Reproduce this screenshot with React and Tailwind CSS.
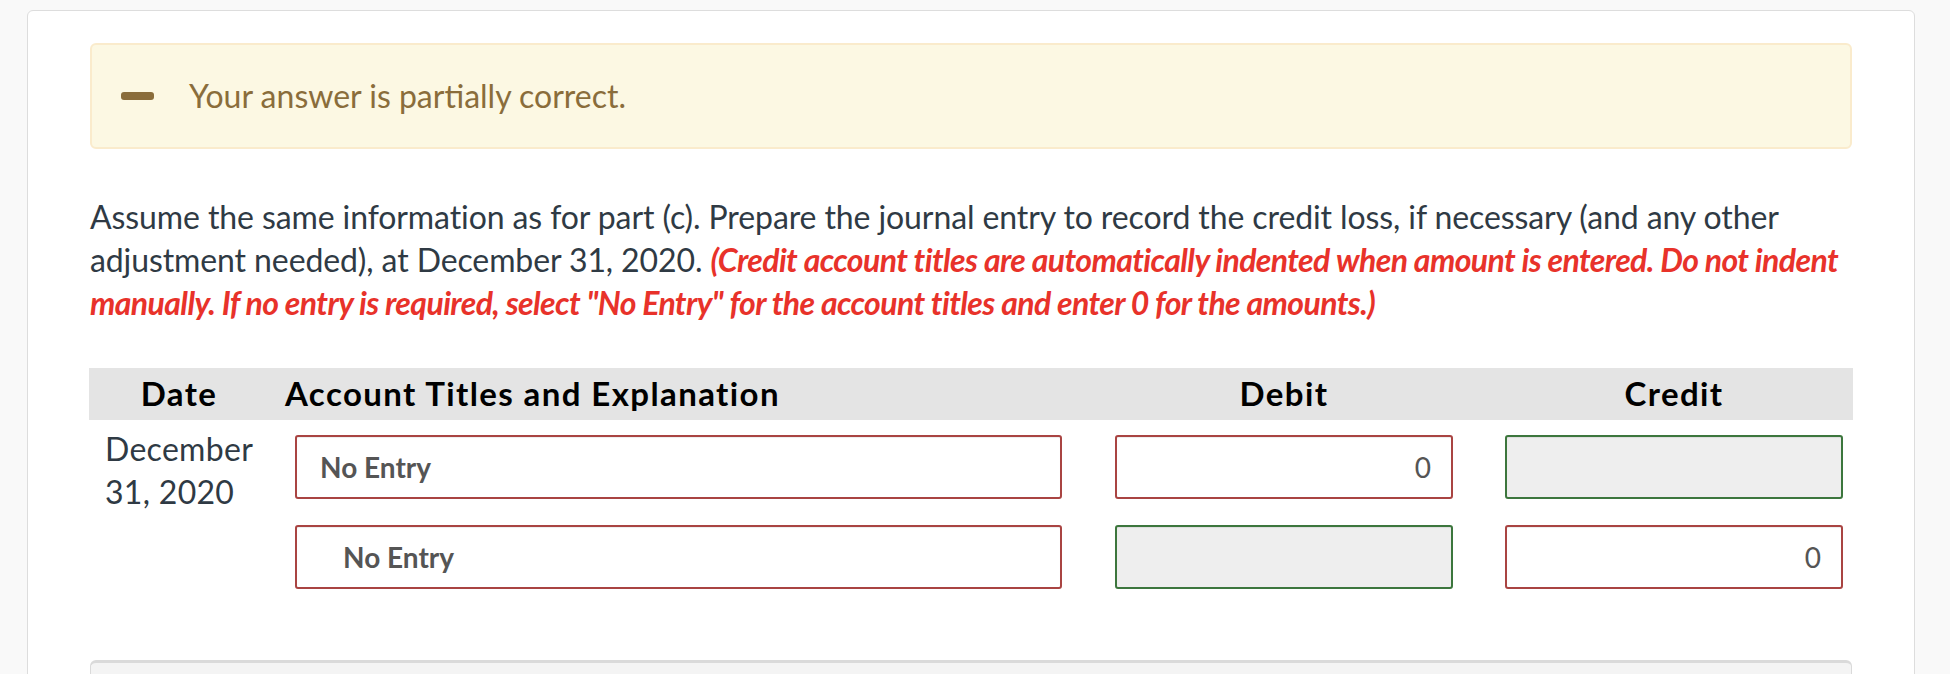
import React from "react";

const rows = [
  { date: ["December", "31, 2020"], account: "No Entry", indent: false, debit: "0", credit: null },
  { date: null, account: "No Entry", indent: true, debit: null, credit: "0" },
];

function AmountBox({ value }) {
  if (value === null) {
    return (
      <div className="h-[64px] w-[338px] rounded-[3px] border-2 border-[#3c763d] bg-[#eeeeee] shadow-[inset_0_1px_1px_rgba(0,0,0,0.075)]" />
    );
  }
  return (
    <div className="flex h-[64px] w-[338px] items-center justify-end rounded-[3px] border-2 border-[#a94442] bg-white pr-[20px] text-[28px] text-[#555] shadow-[inset_0_1px_1px_rgba(0,0,0,0.075)]">
      {value}
    </div>
  );
}

export default function App() {
  return (
    <div
      className="min-h-screen bg-[#f9f9f9] pl-[27px] pr-[35px] pt-[10px]"
      style={{ fontFamily: "Lato, 'Open Sans', sans-serif" }}
    >
      <div className="rounded-md border border-[#dddddd] bg-white px-[62px] pt-[32px]">
        {/* Feedback alert */}
        <div className="flex h-[106px] items-center rounded-md border-2 border-[#faebcc] bg-[#fcf8e3] pl-[29px]">
          <span className="h-[8px] w-[33px] rounded-[3px] bg-[#8a6d3b]" />
          <span className="ml-[35px] text-[32px] text-[#8a6d3b]">Your answer is partially correct.</span>
        </div>

        {/* Question */}
        <p className="mt-[46px] text-[32px] leading-[43px] tracking-[-0.1px] text-[#2f3a44]">
          Assume the same information as for part (c). Prepare the journal entry to record the credit loss, if necessary (and any other
          adjustment needed), at December 31, 2020.{" "}
          <span className="font-bold italic tracking-[-0.6px] text-[#e8322a]">
            (Credit account titles are automatically indented when amount is entered. Do not indent manually. If no entry is required,
            select "No Entry" for the account titles and enter 0 for the amounts.)
          </span>
        </p>

        {/* Journal table */}
        <div className="mt-[44px] -ml-px w-[1764px]">
          <div className="grid h-[52px] grid-cols-[180px_815px_400px_369px] items-center bg-[#e4e4e4] text-[33px] font-bold tracking-[1.4px] text-black">
            <div className="text-center">Date</div>
            <div className="pl-[16px]">Account Titles and Explanation</div>
            <div className="text-center">Debit</div>
            <div className="pl-[11px] text-center">Credit</div>
          </div>

          {rows.map((r, i) => (
            <div
              key={i}
              className={`grid grid-cols-[180px_815px_400px_369px] items-start ${i === 0 ? "pt-[15px]" : "pt-[26px]"}`}
            >
              <div className="-mt-[8px] h-[64px] pl-[16px] text-[32px] leading-[43px] tracking-[0.3px] text-[#2f3a44]">
                {r.date && (
                  <>
                    {r.date[0]}
                    <br />
                    {r.date[1]}
                  </>
                )}
              </div>
              <div className="pl-[26px]">
                <div
                  className={`flex h-[64px] w-[767px] items-center rounded-[3px] border-2 border-[#a94442] bg-white text-[28px] font-bold text-[#555] shadow-[inset_0_1px_1px_rgba(0,0,0,0.075)] ${r.indent ? "pl-[46px]" : "pl-[23px]"}`}
                >
                  {r.account}
                </div>
              </div>
              <div className="flex justify-center">
                <AmountBox value={r.debit} />
              </div>
              <div className="flex justify-end pr-[10px]">
                <AmountBox value={r.credit} />
              </div>
            </div>
          ))}
        </div>

        {/* Next part */}
        <div className="mt-[71px] h-[40px] rounded-t-md border border-t-[3px] border-[#dadada] border-b-0 bg-[#f4f4f4]" />
      </div>
    </div>
  );
}
